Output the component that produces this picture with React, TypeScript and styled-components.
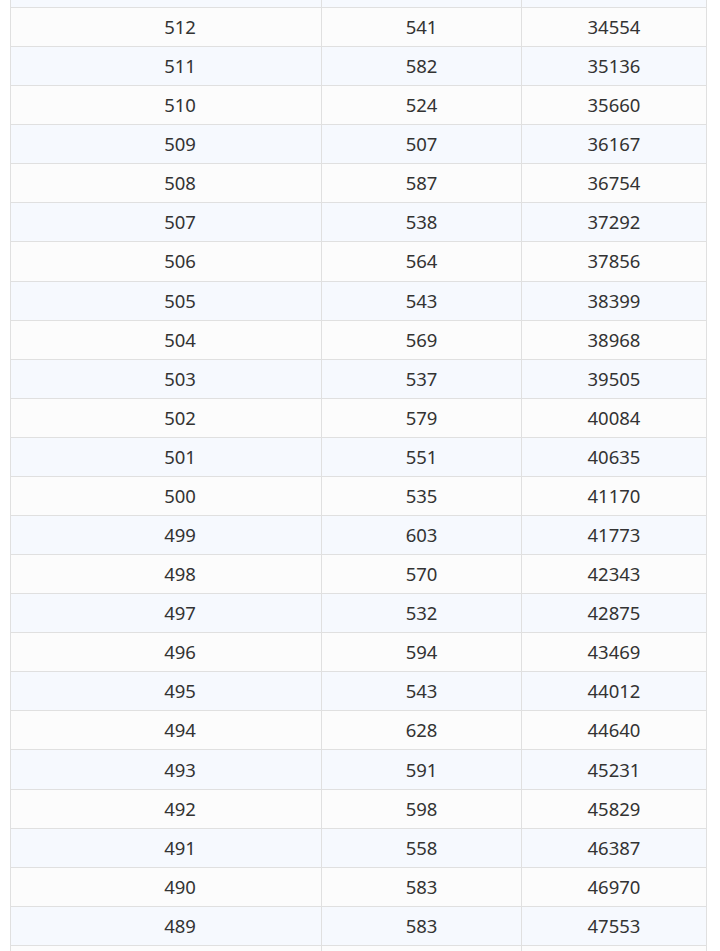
import styled, { createGlobalStyle } from "styled-components";

const GlobalStyle = createGlobalStyle`
  html, body {
    margin: 0;
    padding: 0;
    background: #ffffff;
  }
  body {
    font-family: "Noto Sans", "Open Sans", sans-serif;
    overflow: hidden;
  }
`;

const Page = styled.div`
  height: 951px;
  overflow: hidden;
  padding-left: 10px;
`;

const ScoreTable = styled.table`
  width: 696px;
  margin-top: -32.1px;
  border-collapse: collapse;
  table-layout: fixed;
  color: #333333;
  font-size: 18.5px;
`;

const Row = styled("tr")<{ shaded?: boolean }>`
  background-color: ${(props) => (props.shaded ? "#f6f9fe" : "#fcfcfc")};
`;

const Cell = styled("td")<{ first?: boolean }>`
  height: 38.09px;
  padding: 0;
  padding-left: ${(props) => (props.first ? "28px" : "0")};
  border: 1px solid #e0e0e0;
  text-align: center;
  vertical-align: middle;
  line-height: 38px;
`;

// first and last rows sit mostly outside the window, only their shading shows
const rows: ([number, number, number] | null)[] = [
  null,
  [512, 541, 34554],
  [511, 582, 35136],
  [510, 524, 35660],
  [509, 507, 36167],
  [508, 587, 36754],
  [507, 538, 37292],
  [506, 564, 37856],
  [505, 543, 38399],
  [504, 569, 38968],
  [503, 537, 39505],
  [502, 579, 40084],
  [501, 551, 40635],
  [500, 535, 41170],
  [499, 603, 41773],
  [498, 570, 42343],
  [497, 532, 42875],
  [496, 594, 43469],
  [495, 543, 44012],
  [494, 628, 44640],
  [493, 591, 45231],
  [492, 598, 45829],
  [491, 558, 46387],
  [490, 583, 46970],
  [489, 583, 47553],
  null,
];

export default function App() {
  return (
    <Page>
      <GlobalStyle />
      <ScoreTable>
        <colgroup>
          <col style={{ width: 311 }} />
          <col style={{ width: 200 }} />
          <col style={{ width: 185 }} />
        </colgroup>
        <tbody>
          {rows.map((row, i) => (
            <Row key={i} shaded={i % 2 === 0}>
              <Cell first>{row ? row[0] : ""}</Cell>
              <Cell>{row ? row[1] : ""}</Cell>
              <Cell>{row ? row[2] : ""}</Cell>
            </Row>
          ))}
        </tbody>
      </ScoreTable>
    </Page>
  );
}
